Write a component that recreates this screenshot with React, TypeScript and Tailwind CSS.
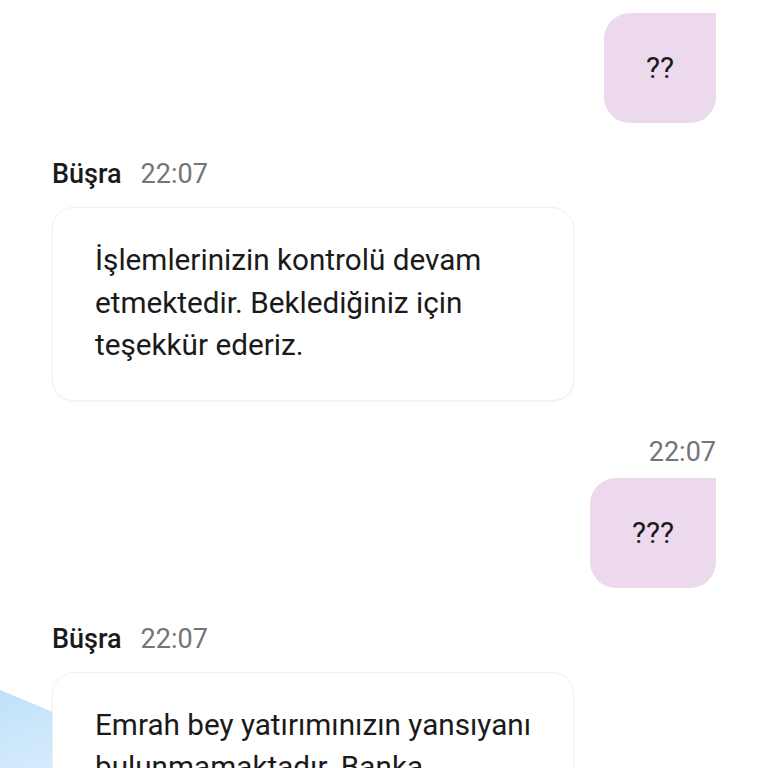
import React from 'react';

type Msg =
  | { id: number; from: 'me'; text: string; time?: string }
  | { id: number; from: 'agent'; name: string; time: string; text: string };

const messages: Msg[] = [
  { id: 1, from: 'me', text: '??' },
  {
    id: 2,
    from: 'agent',
    name: 'Büşra',
    time: '22:07',
    text: 'İşlemlerinizin kontrolü devam etmektedir. Beklediğiniz için teşekkür ederiz.',
  },
  { id: 3, from: 'me', text: '???', time: '22:07' },
  {
    id: 4,
    from: 'agent',
    name: 'Büşra',
    time: '22:07',
    text: 'Emrah bey yatırımınızın yansıyanı bulunmamaktadır. Banka hesabınızı kontrol ederek bilgi verebilir misiniz?',
  },
];

function MyBubble({ text, time }: { text: string; time?: string }) {
  return (
    <div className="flex flex-col items-end">
      {time && <div className="h-[32px] leading-[32px] text-[27px] text-[#757575] mb-[10px]">{time}</div>}
      <div className="bg-[#ecd9ee] rounded-[26px] rounded-tr-none px-[42px] py-[34px] text-[29.7px] leading-[42px] text-[#1a1a1a]">
        {text}
      </div>
    </div>
  );
}

function AgentBubble({ name, time, text }: { name: string; time: string; text: string }) {
  return (
    <div className="flex flex-col items-start">
      <div className="flex items-baseline gap-[19px] h-[32px] leading-[32px] mb-[17px]">
        <span className="text-[27px] font-medium text-[#1a1a1a]">{name}</span>
        <span className="text-[27px] text-[#757575]">{time}</span>
      </div>
      <div className="w-[522px] bg-white border border-[#f0f0f0] shadow-[0_1px_3px_rgba(0,0,0,0.04)] rounded-[22px] pl-[42px] pr-[34px] pt-[31px] pb-[33px] text-[29.7px] leading-[42.5px] text-[#1a1a1a]">
        {text}
      </div>
    </div>
  );
}

export default function App() {
  return (
    <div className="relative h-[768px] w-[768px] overflow-hidden bg-white" style={{ fontFamily: 'Roboto, "Noto Sans", sans-serif' }}>
      {/* decorative blue blob behind the last bubble */}
      <svg className="absolute left-0 top-[680px]" width="120" height="120" viewBox="0 0 120 120">
        <defs>
          <linearGradient id="blob" x1="0" y1="0" x2="0.4" y2="1">
            <stop offset="0" stopColor="#bfe1f9" />
            <stop offset="1" stopColor="#dcefFc" />
          </linearGradient>
        </defs>
        <polygon points="0,10 120,60 120,120 0,120" fill="url(#blob)" />
      </svg>

      <div className="relative flex flex-col gap-[35px] pl-[52px] pr-[52px] pt-[13px]">
        {messages.map(m =>
          m.from === 'me' ? (
            <MyBubble key={m.id} text={m.text} time={m.time} />
          ) : (
            <AgentBubble key={m.id} name={m.name} time={m.time} text={m.text} />
          )
        )}
      </div>
    </div>
  );
}
